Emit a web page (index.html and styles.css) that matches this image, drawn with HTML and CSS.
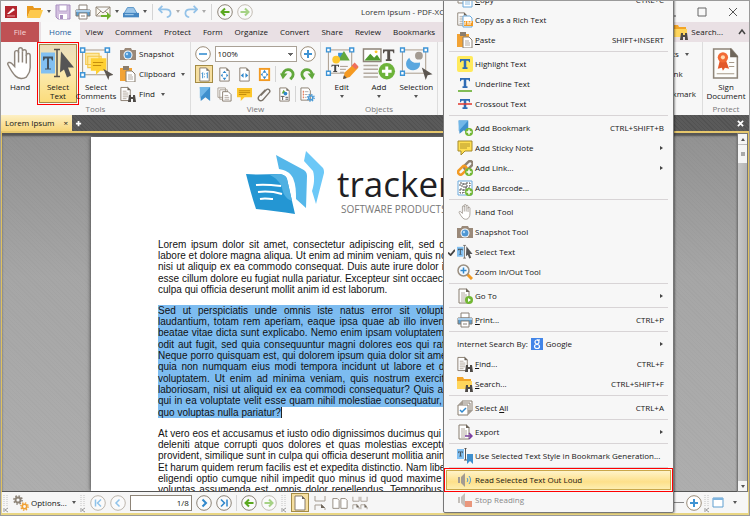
FILE: index.html
```html
<!DOCTYPE html>
<html lang="en">
<head>
    <meta charset="UTF-8">
    <meta name="viewport" content="width=device-width, initial-scale=1.0">
    <title>Lorem Ipsum - PDF-XChange Editor</title>
    <link rel="stylesheet" href="styles.css">
</head>
<body>
    <!-- shared icons -->
    <svg class="sprite" aria-hidden="true">
        <symbol id="i-folder" viewBox="0 0 16 16"><path d="M0 2h6l1 2h7v3H3L0 14z" fill="#e8981d"/><path d="M3 6h13l-3 8H0z" fill="#fdc94d"/></symbol>
        <symbol id="i-save" viewBox="0 0 16 16"><path d="M1 1h14v14H3l-2-2z" fill="#d3c0e0" stroke="#a98fc0"/><path d="M4 1h8v6H4z" fill="#fff" stroke="#b9a4cc"/><path d="M4 10h8v5H4z" fill="#fff"/><path d="M5 11h3v4H5z" fill="#a98fc0"/></symbol>
        <symbol id="i-print" viewBox="0 0 16 16"><path d="M4 1h8v5H4z" fill="#fff" stroke="#8a8178"/><path d="M1 6h14v6H1z" fill="#5f9fd0" stroke="#7d766e"/><path d="M1 6h14v2H1z" fill="#a9cdea"/><path d="M4 9h8v6H4z" fill="#fff" stroke="#8a8178"/><path d="M6 12h4" stroke="#8a8178"/></symbol>
        <symbol id="i-mail" viewBox="0 0 16 16"><path d="M1 3h14v9H1zl7 6 7-6M1 12l5-5M15 12l-5-5" fill="#fbf7ef" stroke="#94897b"/><path d="M6 11h6V8l4 4-4 4v-3H6z" fill="#6eb02b"/></symbol>
        <symbol id="i-scan" viewBox="0 0 18 16"><path d="M5 3h7l4 7H1z" fill="#9bc6ea" stroke="#5590c4"/><path d="M0 9h18v5H0z" fill="#4586c2"/><path d="M2 11h10" stroke="#b9dcf5"/></symbol>
        <symbol id="i-undo" viewBox="0 0 16 16"><path d="M5 1L1 5l4 4M1 5h8c7 0 7 8 1 9" fill="none" stroke="#93c2e8" stroke-width="2"/></symbol>
        <symbol id="i-redo" viewBox="0 0 16 16"><path d="M11 1l4 4-4 4M15 5H7c-7 0-7 8-1 9" fill="none" stroke="#93c2e8" stroke-width="2"/></symbol>
        <symbol id="i-back" viewBox="0 0 16 16"><circle cx="8" cy="8" r="7.3" fill="#fafafa" stroke="#8d8478"/><path d="M12.500 8h-8M8 4.500L4.500 8 8 11.500" fill="none" stroke="#5ba81f" stroke-width="2"/></symbol>
        <symbol id="i-fwd" viewBox="0 0 16 16"><circle cx="8" cy="8" r="7.3" fill="#fafafa" stroke="#c3bdb4"/><path d="M3.500 8h8M8 4.500l3.500 3.500L8 11.500" fill="none" stroke="#a6d285" stroke-width="2"/></symbol>
        <symbol id="i-plus" viewBox="0 0 16 16"><circle cx="8" cy="8" r="7.3" fill="#fff" stroke="#9a8c78"/><path d="M8 4v8M4 8h8" stroke="#3f93d3" stroke-width="2"/></symbol>
        <symbol id="i-minus" viewBox="0 0 16 16"><circle cx="8" cy="8" r="7.3" fill="#fff" stroke="#9a8c78"/><path d="M4 8h8" stroke="#5fa5da" stroke-width="2"/></symbol>
        <symbol id="i-page" viewBox="0 0 16 16"><path d="M3 1h7l3 3v11H3z" fill="#fff" stroke="#877c6e"/><path d="M10 1v3h3z" fill="#6f665b"/></symbol>
        <symbol id="i-textpage" viewBox="0 0 16 16"><path d="M2 1h7l3 3v11H2z" fill="#fff" stroke="#877c6e"/><path d="M9 0l4 4H9z" fill="#6f665b"/><path d="M4 5h4M4 7h6M4 9h6M4 11h6M4 13h4" stroke="#b3aaa0"/></symbol>
        <symbol id="i-binoc" viewBox="0 0 8 8"><path d="M1 1h2v2h2V1h2l1 7H5V5H3v3H0z" fill="#4e4a46"/></symbol>
        <symbol id="i-find" viewBox="0 0 16 16"><use href="#i-textpage" x="-1" width="15" height="16"/><use href="#i-binoc" x="8" y="8" width="8" height="8"/></symbol>
        <symbol id="i-search" viewBox="0 0 16 16"><path d="M0 1h6l1 2h7v10H0z" fill="#f3a526"/><path d="M0 5h15v8H0z" fill="#ffd65c"/><use href="#i-binoc" x="8" y="8" width="8" height="8"/></symbol>
        <symbol id="i-camera" viewBox="0 0 16 16"><path d="M0 4h4l1-2h6l1 2h4v10H0z" fill="#9a8979"/><circle cx="8" cy="9" r="4.500" fill="#fff"/><circle cx="8" cy="9" r="3.500" fill="#4f97d3"/><circle cx="7" cy="8" r="1.200" fill="#b5dcf8"/></symbol>
        <symbol id="i-paste" viewBox="0 0 16 16"><path d="M0 2h12v13H0z" fill="#f2a335"/><path d="M3 0h6v4H3z" fill="#8b7d6c"/><path d="M6 5h6l3 3v8H6z" fill="#fff" stroke="#877c6e"/><path d="M8 9h4M8 11h5M8 13h5" stroke="#b3aaa0"/></symbol>
        <symbol id="i-copy" viewBox="0 0 16 16"><path d="M1 0h8v11H1z" fill="#fff" stroke="#8d8478"/><path d="M6 4h7l2 2v9H6z" fill="#fff" stroke="#6aa9dc"/><path d="M8 8h5M8 10h5M8 12h5" stroke="#8fbfe6"/></symbol>
        <symbol id="i-hand" viewBox="0 0 27 34"><path d="M9 30c-3-3-6-8-8-12-1-2 2-3 4-1l3 3V6c0-3 4-3 4 0V3c0-3 4-3 4 0v2c0-3 4-3 4 0v4c0-3 4-3 4 0v12c0 6-3 8-4 10-3 2-8 2-11-1z" fill="#fff" stroke="#8f867c" stroke-width="1.500"/><path d="M12 5v11M16 5v11M20 8v9" stroke="#8f867c" stroke-width="1.500"/></symbol>
        <symbol id="i-seltext" viewBox="0 0 34 30"><path d="M0 4h14v21H0z" fill="#82c0f1"/><path d="M2 8h10v4h-1l-1-2H8v10h2v1H4v-1h2V10H4l-1 2H2z" fill="#44535f"/><path d="M13 1h6M16 1v27M13 28h6" stroke="#55514c" stroke-width="1.500"/><path d="M20 3l13 16-6 0 3 8-4 2-3-8-4 3z" fill="#555"/></symbol>
        <symbol id="i-bookmark" viewBox="0 0 16 16"><path d="M3 0h11v15l-5-4-5 4z" fill="#3e8fcd"/><path d="M3 0h11L3 12z" fill="#72b7e8"/></symbol>
        <symbol id="i-note" viewBox="0 0 16 16"><path d="M1 1h14v10H8l-4 4v-4H1z" fill="#ffdf52" stroke="#a58b2c"/><path d="M3 4h10M3 6h10M3 8h7" stroke="#b3962c"/></symbol>
        <symbol id="i-badge" viewBox="0 0 8 8"><circle cx="4" cy="4" r="4" fill="#72b734"/><path d="M4 1.500v5M1.500 4h5" stroke="#fff" stroke-width="1.500"/></symbol>
        <symbol id="i-chain" viewBox="0 0 16 16"><g fill="none" stroke-width="2.500"><rect x="6" y="3" width="10" height="5" rx="2.500" transform="rotate(-45 11 5)" stroke="#8d8071"/><rect x="0" y="8" width="10" height="5" rx="2.500" transform="rotate(-45 5 10)" stroke="#f29a22"/></g></symbol>
        <symbol id="i-check" viewBox="0 0 8 8"><path d="M0 4l3 3 5-6" fill="none" stroke="#444" stroke-width="2"/></symbol>
        <symbol id="i-speaker" viewBox="0 0 16 16"><path d="M1 5h2v6H1zM4 5l4-4v14l-4-4z" fill="#a39b92"/></symbol>
        <symbol id="i-handles" viewBox="0 0 32 32"><path d="M3 3h24v24H3z" fill="none" stroke="#a79a89"/><path d="M1 1h4v4H1zM25 1h4v4h-4zM1 25h4v4H1z" fill="#fff" stroke="#3d94d6" stroke-width="1.500"/></symbol>
        <symbol id="i-bigT" viewBox="0 0 12 12"><path d="M0 0h12v4h-1l-1-2H7.500v8H9v2H3v-2h1.500V2H2L1 4H0z" fill="currentColor"/></symbol>
        <symbol id="i-grip" viewBox="0 0 6 20"><path d="M1 2v11M4 2v11" stroke="#dcdcdc" stroke-width="2" stroke-dasharray="1 1"/><path d="M1 15v4M5 15L2 17l3 2" fill="none" stroke="#999"/></symbol>
        <symbol id="i-gear" viewBox="0 0 16 16"><circle cx="8" cy="8" r="4" fill="none" stroke="currentColor" stroke-width="3"/><circle cx="8" cy="8" r="6.500" fill="none" stroke="currentColor" stroke-width="2.500" stroke-dasharray="2.500 2.600"/></symbol>
    </svg>

    <header class="titlebar">
        <svg class="icon12" viewBox="0 0 12 12"><path d="M0 0h12v12H0z" fill="#b3262e"/><path d="M2 8l6-6 2 2-6 4z" fill="#fff"/><path d="M2 10h8" stroke="#e79a9e"/></svg>
        <div class="quick">
            <svg class="icon"><use href="#i-folder"/></svg><i class="caret"></i>
            <svg class="icon"><use href="#i-save"/></svg>
            <svg class="icon"><use href="#i-print"/></svg>
            <svg class="icon"><use href="#i-mail"/></svg><i class="caret"></i>
            <svg class="icon"><use href="#i-scan"/></svg><i class="caret"></i>
            <span class="vsep"></span>
            <svg class="icon14"><use href="#i-undo"/></svg><i class="caret faded"></i>
            <svg class="icon14"><use href="#i-redo"/></svg><i class="caret faded"></i>
            <span class="vsep"></span>
            <svg class="icon"><use href="#i-back"/></svg>
            <svg class="icon"><use href="#i-fwd"/></svg>
        </div>
        <div class="title">Lorem Ipsum - PDF-XChange Editor</div>
        <div class="window-buttons">
            <button aria-label="Minimize"><svg viewBox="0 0 10 10"><path d="M0 9h10" stroke="#555"/></svg></button>
            <button aria-label="Maximize"><svg viewBox="0 0 10 10"><path d="M1 1h8v8H1z" fill="none" stroke="#666"/></svg></button>
            <button aria-label="Close"><svg viewBox="0 0 10 10"><path d="M1 1l8 8M9 1L1 9" stroke="#555"/></svg></button>
        </div>
    </header>

    <nav class="tabs">
        <button class="tab file">File</button>
        <button class="tab active">Home</button>
        <button class="tab">View</button>
        <button class="tab">Comment</button>
        <button class="tab">Protect</button>
        <button class="tab">Form</button>
        <button class="tab">Organize</button>
        <button class="tab">Convert</button>
        <button class="tab">Share</button>
        <button class="tab">Review</button>
        <button class="tab">Bookmarks</button>
        <div class="tab-search">
            <svg class="icon"><use href="#i-search"/></svg>
            <button>Search...</button>
            <svg class="chevron" viewBox="0 0 8 8"><path d="M1 6l3-4 3 4" fill="none" stroke="#444" stroke-width="1.500"/></svg>
        </div>
    </nav>

    <section class="ribbon">
        <div class="group tools">
            <div class="group-body">
                <button class="big"><svg><use href="#i-hand"/></svg><span>Hand</span></button>
                <button class="big selected"><svg><use href="#i-seltext"/></svg><span>Select<br>Text</span></button>
                <button class="big">
                    <svg viewBox="0 0 32 32"><use href="#i-handles" width="32" height="32"/><path d="M6 6h13v11H6zM8 9h13v11H8z" fill="#ffe9a0" stroke="#f4c64a"/><path d="M11 11h15v12h-6l-4 4v-4h-5z" fill="#ffd032"/><path d="M13 15h10M13 18h8" stroke="#c58e0c"/><path d="M23 21l10 6-4 1-1 4z" fill="#5c5650"/></svg>
                    <span>Select<br>Comments</span>
                </button>
                <div class="stack">
                    <button class="small"><svg><use href="#i-camera"/></svg>Snapshot</button>
                    <button class="small"><svg><use href="#i-paste"/></svg>Clipboard<i class="caret"></i></button>
                    <button class="small"><svg><use href="#i-find"/></svg>Find<i class="caret"></i></button>
                </div>
            </div>
            <div class="group-label">Tools</div>
        </div>

        <div class="group view">
            <div class="group-body rows">
                <div class="row">
                    <button class="round" aria-label="Zoom out"><svg><use href="#i-minus"/></svg></button>
                    <select class="zoom" aria-label="Zoom"><option>100%</option></select>
                    <button class="round" aria-label="Zoom in"><svg><use href="#i-plus"/></svg></button>
                </div>
                <div class="row icons">
                    <button class="pressed" aria-label="Actual size"><svg viewBox="0 0 16 16"><use href="#i-page" width="16" height="16"/><path d="M5 7l1-1v6M8 7v1M8 10v1M10 7l1-1v6" fill="none" stroke="#3088cc"/></svg></button>
                    <button aria-label="Fit page"><svg viewBox="0 0 16 16"><use href="#i-page" width="16" height="16"/><path d="M8 4l2 2.500H6zM8 14l2-2.500H6zM4 9l2-2v4zM12 9l-2-2v4z" fill="#3088cc"/></svg></button>
                    <button aria-label="Fit width"><svg viewBox="0 0 16 16"><use href="#i-page" width="16" height="16"/><path d="M4 9l3-2.500v5zM12 9L9 6.500v5z" fill="#3088cc"/></svg></button>
                    <button aria-label="Fit visible"><svg viewBox="0 0 16 16"><path d="M2 1h12v14H2z" fill="#f29a22"/><path d="M4 3h8v10H4z" fill="#fff"/><path d="M8 3l2 3H6zM8 13l2-3H6zM4 8l2-2v4zM12 8l-2-2v4z" fill="#3088cc"/></svg></button>
                    <span class="vsep"></span>
                    <button aria-label="Rotate left"><svg viewBox="0 0 16 16"><path d="M3 9c0-8 11-8 11-1 0 3-2 4-3 5" fill="none" stroke="#62a83c" stroke-width="3"/><path d="M0 7h8l-5 6z" fill="#62a83c"/></svg></button>
                    <button aria-label="Rotate right"><svg viewBox="0 0 16 16"><path d="M13 9C13 1 2 1 2 8c0 3 2 4 3 5" fill="none" stroke="#62a83c" stroke-width="3"/><path d="M16 7H8l5 6z" fill="#62a83c"/></svg></button>
                </div>
                <div class="row icons">
                    <button aria-label="Bookmarks pane"><svg><use href="#i-bookmark"/></svg></button>
                    <button aria-label="Thumbnails"><svg viewBox="0 0 16 16"><path d="M1 1h8v10H1zM3 3h8v10H3z" fill="#fff" stroke="#a89e92"/><path d="M6 5h6l3 3v7H6z" fill="#fff" stroke="#877c6e"/><path d="M8 9h4M8 11h5M8 13h5" stroke="#b3aaa0"/></svg></button>
                    <button aria-label="Comments pane"><svg viewBox="0 0 16 16"><path d="M0 1h16v10H8l-4 4v-4H0z" fill="#fdc72c"/><path d="M2 4h12M2 6h12M2 8h8" stroke="#c08a0a"/></svg></button>
                    <button aria-label="Attachments"><svg viewBox="0 0 16 16"><path d="M4 9l6-6c2-2 5 1 3 3l-7 8c-3 2-6-1-4-4l7-7" fill="none" stroke="#7b736a" stroke-width="1.500"/></svg></button>
                    <button aria-label="Content"><svg viewBox="0 0 16 16"><use href="#i-page" width="16" height="16"/><path d="M5 7l2-4 3 4z" fill="#62a83c"/><circle cx="9" cy="7" r="2" fill="#3088cc"/><path d="M4 10h4M6 10v4M9 11h3M9 13h3" stroke="#555"/></svg></button>
                    <span class="vsep"></span>
                    <button aria-label="Pane options"><svg viewBox="0 0 16 16"><path d="M1 1h8l2 3v10H1z" fill="#fff" stroke="#877c6e"/><path d="M3 5h1M3 8h1M3 11h1" stroke="#e2592b" stroke-width="2"/><path d="M5 5h4M5 8h3M5 11h2" stroke="#aaa"/><g color="#4c9bd6"><use href="#i-gear" x="7" y="7" width="9" height="9"/></g></svg></button>
                </div>
            </div>
            <div class="group-label">View</div>
        </div>

        <div class="group objects">
            <div class="group-body">
                <button class="big">
                    <svg viewBox="0 0 34 34"><use href="#i-handles" width="32" height="32"/><path d="M13 6h6v7h-6z" fill="#3d94d6"/><path d="M13 14l6-10 6 10z" fill="#62a83c"/><circle cx="11" cy="13" r="4" fill="#fdc72c"/><g color="#444"><use href="#i-bigT" x="6" y="18" width="8" height="8"/></g><path d="M15 20h8M15 23h6M15 26h4" stroke="#a79a89"/><path d="M18 33l2-7 10-9 4 4-9 10z" fill="#f59a22"/><path d="M27 19l3-3 4 4-3 3z" fill="#ef6f5c"/><path d="M18 33l1-4 3 3z" fill="#555"/></svg>
                    <span>Edit</span><i class="caret"></i>
                </button>
                <button class="big">
                    <svg viewBox="0 0 34 34"><path d="M1 2h18v13H1z" fill="#fff" stroke="#8d8478" stroke-width="1.500"/><path d="M2 14l6-7 4 4 3-3 4 6z" fill="#4f9a2e"/><circle cx="14" cy="5" r="1.500" fill="#fdc72c"/><g color="#554f4a"><use href="#i-bigT" x="21" y="2" width="12" height="13"/></g><path d="M1 19h15M1 23h15M1 27h15M1 31h15" stroke="#b3aaa0" stroke-width="1.500"/><circle cx="25" cy="25" r="8.500" fill="#6db33a"/><path d="M25 20v10M20 25h10" stroke="#fff" stroke-width="3"/></svg>
                    <span>Add</span><i class="caret"></i>
                </button>
                <button class="big">
                    <svg viewBox="0 0 34 34"><use href="#i-handles" width="32" height="32"/><circle cx="20" cy="9" r="4" fill="#a39b92"/><path d="M10 11c-6 5-3 13 4 13 5 0 8-4 7-8-5 1-9 0-11-5z" fill="#5aa7df"/><path d="M23 21l11 7-5 1-2 5z" fill="#5c5650"/></svg>
                    <span>Selection</span><i class="caret"></i>
                </button>
            </div>
            <div class="group-label">Objects</div>
        </div>

        <div class="group links">
            <div class="group-body">
                <div class="stack">
                    <button class="small">Web Links<i class="caret"></i></button>
                    <button class="small">Create Link</button>
                    <button class="small">Add Bookmark</button>
                </div>
            </div>
        </div>
        <div class="group protect">
            <div class="group-body">
                <button class="big">
                    <svg viewBox="0 0 28 32"><path d="M2 2h17l6 7v21H2z" fill="#fdfdfb" stroke="#8d8478" stroke-width="1.500"/><path d="M18 1l8 9h-8z" fill="#6f665b"/><path d="M8 13l-2 8 4-1 1 3 2-3 4 1-3-8z" fill="#e2592b"/><circle cx="11" cy="10" r="5" fill="#f26a35"/><circle cx="11" cy="10" r="2" fill="#ffd9b0"/><path d="M17 15h5M17 19h5M5 26h17" stroke="#a79a89"/></svg>
                    <span>Sign<br>Document</span>
                </button>
            </div>
            <div class="group-label">Protect</div>
        </div>
    </section>

    <div class="doc-tabs">
        <button class="doc-tab">Lorem Ipsum <span>×</span></button>
        <button class="doc-add" aria-label="New tab"><svg viewBox="0 0 8 8"><path d="M4 1v6M1 4h6" stroke="#fff" stroke-width="2"/></svg></button>
        <button class="doc-close" aria-label="Close all"><svg viewBox="0 0 8 8"><path d="M1 1l6 6M7 1L1 7" stroke="#fff" stroke-width="2"/></svg></button>
    </div>

    <div class="workspace">
        <main class="viewport">
            <article class="page">
                <div class="brand">
                    <svg viewBox="0 0 80 65"><path d="M1 23c12 1 23 0 34 0 4 1 6 2 7 5l8 35c-13-2-26-4-39-5C7 46 4 35 1 23z" fill="#2496d3"/><path d="M25 24c5-1 8-1 10-1 4 1 6 2 7 5l5 22c-6-2-9-7-10-13-2-6-6-10-12-13z" fill="#4fb0e2"/><path d="M11 34c9-1 17 0 25 1M13 41c8-1 17 0 24 2M15 48c5-1 9 0 13 0" fill="none" stroke="#fff" stroke-width="2"/><path d="M31 4l26 14c4 2 5 4 5 7l-1 32-10-9c0-7 0-14-3-21-3-6-8-8-14-9z" fill="#55b7ea"/><path d="M61 0l17 17c1 2 1 3 1 5l-8 31-4-13c2-6 3-13 1-20l-9-10z" fill="#6cc8f7"/></svg>
                    <div>
                        <div class="brand-name">tracker</div>
                        <div class="brand-sub">SOFTWARE PRODUCTS</div>
                    </div>
                </div>
                <p>
                    <span>Lorem ipsum dolor sit amet, consectetur adipiscing elit, sed do eiusmod tempor incididunt ut</span>
                    <span>labore et dolore magna aliqua. Ut enim ad minim veniam, quis nostrud exercitation ullamco laboris</span>
                    <span>nisi ut aliquip ex ea commodo consequat. Duis aute irure dolor in reprehenderit in voluptate velit</span>
                    <span>esse cillum dolore eu fugiat nulla pariatur. Excepteur sint occaecat cupidatat non proident, sunt in</span>
                    <span class="last">culpa qui officia deserunt mollit anim id est laborum.</span>
                </p>
                <p class="marked">
                    <span>Sed ut perspiciatis unde omnis iste natus error sit voluptatem accusantium doloremque</span>
                    <span>laudantium, totam rem aperiam, eaque ipsa quae ab illo inventore veritatis et quasi architecto</span>
                    <span>beatae vitae dicta sunt explicabo. Nemo enim ipsam voluptatem quia voluptas sit aspernatur aut</span>
                    <span>odit aut fugit, sed quia consequuntur magni dolores eos qui ratione voluptatem sequi nesciunt.</span>
                    <span>Neque porro quisquam est, qui dolorem ipsum quia dolor sit amet, consectetur, adipisci velit, sed</span>
                    <span>quia non numquam eius modi tempora incidunt ut labore et dolore magnam aliquam quaerat</span>
                    <span>voluptatem. Ut enim ad minima veniam, quis nostrum exercitationem ullam corporis suscipit</span>
                    <span>laboriosam, nisi ut aliquid ex ea commodi consequatur? Quis autem vel eum iure reprehenderit</span>
                    <span>qui in ea voluptate velit esse quam nihil molestiae consequatur, vel illum qui dolorem eum fugiat</span>
                    <span class="last">quo voluptas nulla pariatur?</span>
                </p>
                <p>
                    <span>At vero eos et accusamus et iusto odio dignissimos ducimus qui blanditiis praesentium voluptatum</span>
                    <span>deleniti atque corrupti quos dolores et quas molestias excepturi sint occaecati cupiditate non</span>
                    <span>provident, similique sunt in culpa qui officia deserunt mollitia animi, id est laborum et dolorum fuga.</span>
                    <span>Et harum quidem rerum facilis est et expedita distinctio. Nam libero tempore, cum soluta nobis est</span>
                    <span>eligendi optio cumque nihil impedit quo minus id quod maxime placeat facere possimus, omnis</span>
                    <span>voluptas assumenda est, omnis dolor repellendus. Temporibus autem quibusdam et aut officiis</span>
                </p>
            </article>
        </main>
        <div class="scrollbar">
            <button aria-label="Scroll up"><i class="caret up"></i></button>
            <div class="thumb"></div>
            <button class="down" aria-label="Scroll down"><i class="caret"></i></button>
        </div>
    </div>

    <footer class="statusbar">
        <svg class="grip"><use href="#i-grip"/></svg>
        <button class="options">
            <svg viewBox="0 0 16 16"><g color="#8d8478"><use href="#i-gear" width="10" height="10"/></g><g color="#f0a032"><use href="#i-gear" x="7" y="7" width="9" height="9"/></g></svg>
            Options...<i class="caret"></i>
        </button>
        <svg class="grip"><use href="#i-grip"/></svg>
        <button class="round" aria-label="First page"><svg viewBox="0 0 16 16"><circle cx="8" cy="8" r="7.300" fill="#fafafa" stroke="#bdb6ad"/><path d="M5.500 4.500v7M11 4.500L7.500 8l3.500 3.500" fill="none" stroke="#8fc3ea" stroke-width="1.500"/></svg></button>
        <button class="round" aria-label="Previous page"><svg viewBox="0 0 16 16"><circle cx="8" cy="8" r="7.300" fill="#fafafa" stroke="#bdb6ad"/><path d="M9.500 4.500L6 8l3.500 3.500" fill="none" stroke="#8fc3ea" stroke-width="1.500"/></svg></button>
        <input class="page-no" type="text" value="1/8" aria-label="Page">
        <button class="round" aria-label="Next page"><svg viewBox="0 0 16 16"><circle cx="8" cy="8" r="7.300" fill="#fafafa" stroke="#8d8478"/><path d="M6.500 4.500L10 8l-3.500 3.500" fill="none" stroke="#2f87cb" stroke-width="2"/></svg></button>
        <button class="round" aria-label="Last page"><svg viewBox="0 0 16 16"><circle cx="8" cy="8" r="7.300" fill="#fafafa" stroke="#8d8478"/><path d="M5 4.500L8.500 8 5 11.500M11 4.500v7" fill="none" stroke="#2f87cb" stroke-width="1.500"/></svg></button>
        <span class="vsep"></span>
        <button class="round" aria-label="Back"><svg><use href="#i-back"/></svg></button>
        <button class="round" aria-label="Forward"><svg><use href="#i-fwd"/></svg></button>
        <svg class="grip"><use href="#i-grip"/></svg>
        <button class="layout pressed" aria-label="Single page"><svg viewBox="0 0 16 16"><use href="#i-page" width="16" height="16"/></svg></button>
        <button class="layout" aria-label="Continuous"><svg viewBox="0 0 16 16"><path d="M3 1v5h10V1M3 15v-5h7l3 3v2" fill="none" stroke="#a59c91"/><path d="M9 9v4h4z" fill="#6f665b"/></svg></button>
        <button class="layout" aria-label="Two pages"><svg viewBox="0 0 18 16"><path d="M1 3h5l2 2v9H1zM10 3h5l2 2v9h-7z" fill="#fff" stroke="#8d8478"/></svg></button>
        <button class="layout" aria-label="Two pages continuous"><svg viewBox="0 0 18 16"><path d="M1 1v5h7V1M1 15v-5h5l2 3v2M10 1v5h7V1M10 15v-5h5l2 3v2" fill="none" stroke="#a59c91"/><path d="M5 9v4h3zM14 9v4h3z" fill="#6f665b"/></svg></button>
        <div class="zoom-tools">
            <input type="range" aria-label="Zoom level">
            <button class="round" aria-label="Zoom in"><svg><use href="#i-plus"/></svg></button>
            <svg class="grip"><use href="#i-grip"/></svg>
            <svg class="icon12" viewBox="0 0 12 12"><path d="M1 1h10v9H1z" fill="#fff" stroke="#5f9fd0"/><path d="M1 1h10v2H1z" fill="#7fb5e0"/></svg>
            <i class="caret"></i>
        </div>
    </footer>

    <div class="menu" role="menu">
        <button class="item"><svg><use href="#i-copy"/></svg><span><u>C</u>opy</span><kbd>CTRL+C</kbd></button>
        <button class="item"><svg viewBox="0 0 16 16"><use href="#i-textpage" x="-1" width="14" height="14"/><path d="M6 4h7l2 2v9H6z" fill="#fff" stroke="#6aa9dc"/><path d="M7 9h9v5H7z" fill="#f29a22"/><path d="M8 13v-3h1M11 10v3M10 10h2M13 13v-3h2" fill="none" stroke="#fff"/></svg><span>Copy as a Rich Text</span></button>
        <button class="item"><svg><use href="#i-paste"/></svg><span><u>P</u>aste</span><kbd>SHIFT+INSERT</kbd></button>
        <hr>
        <button class="item"><svg viewBox="0 0 16 16"><rect width="16" height="16" rx="2" fill="#ffea5c"/><g color="#2f6cb5"><use href="#i-bigT" x="3" y="2" width="10" height="12"/></g></svg><span>Highlight Text</span></button>
        <button class="item"><svg viewBox="0 0 16 16"><g color="#2f6cb5"><use href="#i-bigT" x="3" y="1" width="10" height="12"/></g><path d="M1 15h14" stroke="#5ba81f" stroke-width="1.500"/></svg><span>Underline Text</span></button>
        <button class="item"><svg viewBox="0 0 16 16"><g color="#2f6cb5"><use href="#i-bigT" x="3" y="2" width="10" height="12"/></g><path d="M1 8h14" stroke="#e0372c" stroke-width="1.500"/></svg><span>Crossout Text</span></button>
        <hr>
        <button class="item"><svg viewBox="0 0 16 16"><use href="#i-bookmark" x="-1" width="14" height="15"/><use href="#i-badge" x="8" y="8" width="8" height="8"/></svg><span>Add Bookmark</span><kbd>CTRL+SHIFT+B</kbd></button>
        <button class="item"><svg><use href="#i-note"/></svg><span>Add Sticky Note</span><i class="arrow"></i></button>
        <button class="item"><svg viewBox="0 0 16 16"><use href="#i-chain" width="16" height="16"/><use href="#i-badge" x="8" y="8" width="8" height="8"/></svg><span>Add Link...</span><i class="arrow"></i></button>
        <button class="item"><svg viewBox="0 0 16 16"><path d="M1 1h14v14H1z" fill="#fff" stroke="#6aa9dc"/><path d="M3 3h3v3H3zM9 3h4v3H9zM3 9h3v4H3zM7 3v10M8 8h5M9 6v5" fill="none" stroke="#555" stroke-dasharray="2 1"/><use href="#i-badge" x="8" y="8" width="8" height="8"/></svg><span>Add Barcode...</span></button>
        <hr>
        <button class="item"><svg><use href="#i-hand"/></svg><span>Hand Tool</span></button>
        <button class="item"><svg><use href="#i-camera"/></svg><span>Snapshot Tool</span></button>
        <button class="item checked"><svg class="tick"><use href="#i-check"/></svg><svg><use href="#i-seltext"/></svg><span>Select Text</span></button>
        <button class="item"><svg viewBox="0 0 16 16"><path d="M10 10l5 5" stroke="#f29a22" stroke-width="3"/><circle cx="6.500" cy="6.500" r="5.500" fill="#f2f9ff" stroke="#9b8f80" stroke-width="1.500"/><path d="M6.500 3.500v6M3.500 6.500h6" stroke="#3088cc" stroke-width="1.500"/></svg><span>Zoom In/Out Tool</span></button>
        <hr>
        <button class="item"><svg viewBox="0 0 16 16"><use href="#i-textpage" width="16" height="16"/><circle cx="12" cy="12" r="4" fill="#72b734"/><path d="M11 10l3 2-3 2z" fill="#fff"/></svg><span>Go To</span><i class="arrow"></i></button>
        <hr>
        <button class="item"><svg><use href="#i-print"/></svg><span><u>P</u>rint...</span><kbd>CTRL+P</kbd></button>
        <hr>
        <button class="item wide"><span>Internet Search By:</span><svg viewBox="0 0 12 12"><path d="M0 0h12v12H0z" fill="#4285e8"/><g fill="none" stroke="#fff" stroke-width="1.200"><circle cx="6" cy="4" r="2"/><ellipse cx="6" cy="8.500" rx="2.500" ry="2"/><path d="M6 2h3"/></g></svg><span>Google</span><i class="arrow"></i></button>
        <button class="item"><svg><use href="#i-find"/></svg><span><u>F</u>ind...</span><kbd>CTRL+F</kbd></button>
        <button class="item"><svg><use href="#i-search"/></svg><span><u>S</u>earch...</span><kbd>CTRL+SHIFT+F</kbd></button>
        <hr>
        <button class="item"><svg viewBox="0 0 16 16"><path d="M5 1h10v10H5zM3 3h10v10H3z" fill="#fff" stroke="#877c6e"/><path d="M1 5h10v10H1z" fill="#fff" stroke="#877c6e"/><path d="M3 10l2 2 4-4" fill="none" stroke="#3088cc" stroke-width="1.500"/></svg><span>Select <u>A</u>ll</span><kbd>CTRL+A</kbd></button>
        <hr>
        <button class="item"><svg viewBox="0 0 16 16"><use href="#i-textpage" width="16" height="16"/><path d="M8 12h7M12 9l3 3-3 3" fill="none" stroke="#7b3fa0" stroke-width="1.500"/></svg><span>Export</span><i class="arrow"></i></button>
        <hr>
        <button class="item"><svg viewBox="0 0 16 16"><path d="M0 1h7v10H0z" fill="#82c0f1"/><g color="#44535f"><use href="#i-bigT" x="1" y="3" width="5" height="6"/></g><path d="M7 0h3M8.500 0v12M7 12h3" stroke="#555"/><path d="M10 6h6v10l-3-3-3 3z" fill="#3e8fcd"/></svg><span>Use Selected Text Style in Bookmark Generation...</span></button>
        <hr>
        <button class="item hot"><svg viewBox="0 0 16 16"><use href="#i-speaker" width="16" height="16"/><path d="M10 6c1 1 1 3 0 4M12 4c2 2 2 6 0 8" fill="none" stroke="#4c9bd6"/></svg><span>Read Selected Text Out Loud</span></button>
        <button class="item disabled" disabled><svg viewBox="0 0 16 16"><use href="#i-speaker" width="16" height="16"/><path d="M8 9h7v6H8z" fill="#e2592b"/></svg><span>Stop Reading</span></button>
    </div>
</body>
</html>
```
FILE: styles.css
```css
* {
    box-sizing: border-box;
}

body {
    margin: 0;
    height: 100vh;
    display: flex;
    flex-direction: column;
    position: relative;
    overflow: hidden;
    border: 1px solid #9a9a9a;
    background: #f7f7f7;
    color: #151515;
    font-family: "Open Sans", "Noto Sans", sans-serif;
    font-size: 8px;
    line-height: 10px;
}

button, input, select {
    font: inherit;
    color: inherit;
    border: none;
    background: none;
    padding: 0;
    margin: 0;
}

svg {
    display: block;
    flex: none;
}

.sprite {
    position: absolute;
    width: 0;
    height: 0;
}

.icon {
    width: 16px;
    height: 16px;
}

.icon14 {
    width: 14px;
    height: 14px;
}

.icon12 {
    width: 12px;
    height: 12px;
}

.caret {
    flex: none;
    border: 2px solid transparent;
    border-top: 3px solid #555555;
    border-bottom: 0;
}

.caret.faded {
    border-top-color: #aaaaaa;
}

.caret.up {
    border-top: 0;
    border-bottom: 3px solid #555555;
}

.vsep {
    width: 1px;
    height: 16px;
    background: #d4d4d4;
}

/* title bar */
.titlebar {
    flex: none;
    height: 21px;
    display: flex;
    align-items: center;
    padding: 0 11px 0 4px;
    background: #f8f8f8;
}

.quick {
    display: flex;
    align-items: center;
    gap: 4px;
    margin-left: 10px;
}

.quick .vsep {
    margin: 0 1px;
}

.title {
    margin-left: 108px;
    color: #333333;
}

.window-buttons {
    margin-left: auto;
    display: flex;
    gap: 21px;
}

.window-buttons svg {
    width: 10px;
    height: 10px;
}

/* ribbon tabs */
.tabs {
    flex: none;
    height: 20px;
    display: flex;
    background: #e9e0e4;
}

.tab {
    padding: 0 6px;
}

.tab.file {
    width: 38px;
    margin-right: 2px;
    background: #bf5154;
    color: #f6d5d5;
}

.tab.active {
    padding: 0 8px;
    background: #f9f9f9;
    color: #1d5c9c;
}

.tab-search {
    margin-left: auto;
    display: flex;
    align-items: center;
    gap: 3px;
    padding-right: 3px;
}

.chevron {
    width: 8px;
    height: 8px;
    margin-left: 12px;
}

/* ribbon */
.ribbon {
    flex: none;
    height: 73px;
    display: flex;
    background: #f7f7f7;
}

.group {
    display: flex;
    flex-direction: column;
    border-right: 1px solid #dddddd;
}

.group-body {
    flex: none;
    height: 62px;
    display: flex;
    padding: 2px 2px 0;
}

.group-label {
    height: 11px;
    text-align: center;
    color: #777777;
}

.big {
    width: 38px;
    display: flex;
    flex-direction: column;
    align-items: center;
    padding-top: 3px;
    line-height: 9px;
}

.big svg {
    width: 34px;
    height: 33px;
    margin-bottom: 2px;
}

.big .caret {
    margin-top: 4px;
}

.big.selected {
    height: 59px;
    padding-top: 2px;
    border: 1px solid #a38b45;
    background: linear-gradient(#e9ddbb, #fbe9ad 50%, #fbdc7c);
    outline: 1px solid #ff0000;
    outline-offset: 1px;
}

.stack {
    display: flex;
    flex-direction: column;
}

.small {
    height: 20px;
    display: flex;
    align-items: center;
    gap: 3px;
}

.small svg {
    width: 16px;
    height: 16px;
}

.small .caret {
    margin-left: 3px;
}

.tools {
    width: 190px;
}

.tools .group-body {
    padding-left: 0;
}

.tools .stack {
    margin-left: 5px;
}

.view {
    width: 130px;
}

.view .rows {
    flex-direction: column;
    padding: 2px 4px 0;
}

.row {
    height: 20px;
    display: flex;
    align-items: center;
    justify-content: space-between;
}

.round svg {
    width: 16px;
    height: 16px;
}

.zoom {
    width: 82px;
    height: 16px;
    appearance: none;
    padding: 0 2px;
    border: 1px solid #a9a196;
    background: linear-gradient(#666666, #666666) 72px 6px / 5px 1px no-repeat, linear-gradient(#666666, #666666) 73px 7px / 3px 1px no-repeat, linear-gradient(#666666, #666666) 74px 8px / 1px 1px no-repeat, #ffffff;
}

.icons button {
    width: 18px;
    height: 18px;
    display: flex;
    align-items: center;
    justify-content: center;
}

.icons svg {
    width: 15px;
    height: 15px;
}

.icons .pressed, .layout.pressed {
    border: 1px solid #a38b45;
    background: #f6dfa0;
}

.objects {
    width: 117px;
}

.links {
    margin-left: auto;
}

.links .group-body {
    padding: 2px 6px 0 0;
}

.protect {
    width: 46px;
    border-right: none;
}

.protect .group-body {
    justify-content: center;
}

/* document tabs */
.doc-tabs {
    flex: none;
    height: 16px;
    display: flex;
    align-items: center;
    background: repeating-linear-gradient(45deg, #525252 0 1px, #5a5a5a 1px 3px);
}

.doc-tab {
    height: 16px;
    width: 71px;
    padding: 0 4px;
    display: flex;
    align-items: center;
    justify-content: space-between;
    background: linear-gradient(#fdf0c4, #f8d67a);
}

.doc-add svg, .doc-close svg {
    width: 7px;
    height: 7px;
}

.doc-add {
    margin-left: 3px;
}

.doc-close {
    margin-left: auto;
    margin-right: 5px;
}

/* document area */
.workspace {
    flex: 1;
    min-height: 0;
    display: flex;
    border: 1px solid #e0c15f;
    border-top: 2px solid #e6c76c;
    border-bottom: none;
}

.viewport {
    flex: 1;
    overflow: hidden;
    padding: 3px 82px 0 89px;
    border: 1px solid #555555;
    border-width: 1px 0;
    background: repeating-linear-gradient(45deg, rgba(0, 0, 0, .02) 0 1px, transparent 1px 3px), linear-gradient(#929292, #a6a6a6 40%, #aeaeae);
    box-shadow: inset 0 2px 2px #555555;
}

.page {
    height: 100%;
    overflow: hidden;
    padding: 14px 67px 0;
    background: #ffffff;
    color: #111111;
    box-shadow: 0 0 4px #333333;
    font-family: "Liberation Sans", Arial, sans-serif;
    font-size: 10px;
    line-height: 11px;
}

.brand {
    display: flex;
    gap: 12px;
    margin-left: 87px;
    height: 88px;
    font-family: "Open Sans", sans-serif;
    white-space: nowrap;
}

.brand svg {
    width: 80px;
    height: 65px;
}

.brand-name {
    padding-top: 13px;
    font-size: 35px;
    line-height: 40px;
    color: #1f1f24;
}

.brand-sub {
    padding-left: 4px;
    color: #777777;
}

.page p {
    margin: 0 0 10px;
}

.page p span {
    display: block;
    white-space: nowrap;
    text-align: justify;
    text-align-last: justify;
}

.page p span:nth-child(3n) {
    line-height: 12px;
}

.page p .last {
    width: max-content;
    text-align-last: left;
}

.marked span {
    background: #7dbcf0;
}

.marked .last {
    border-right: 1px solid #222222;
}

.scrollbar {
    flex: none;
    width: 11px;
    display: flex;
    flex-direction: column;
    border: 1px solid #777777;
    background: linear-gradient(90deg, #c8c8c8, #b4b4b4);
}

.scrollbar button {
    height: 10px;
    display: flex;
    align-items: center;
    justify-content: center;
    background: #f5f5f5;
}

.scrollbar .down {
    margin-top: auto;
}

.thumb {
    height: 18px;
    margin-top: 1px;
    background: linear-gradient(#aaaaaa, #aaaaaa) 3px 7px / 4px 4px no-repeat, #f5f5f5;
}

/* status bar */
.statusbar {
    flex: none;
    height: 23px;
    display: flex;
    align-items: center;
    gap: 4px;
    padding: 0 1px;
    border: 1px solid #e6d48f;
    border-top: none;
    border-bottom: 2px solid #e9d683;
    background: #f6f6f6;
}

.grip {
    width: 6px;
    height: 20px;
}

.options {
    display: flex;
    align-items: center;
    gap: 2px;
}

.options svg {
    width: 16px;
    height: 16px;
}

.options .caret {
    margin-left: 3px;
}

.page-no {
    width: 62px;
    height: 16px;
    padding: 0 2px;
    text-align: right;
    border: 1px solid #8d8478;
    background: #ffffff;
}

.layout {
    width: 18px;
    height: 19px;
    display: flex;
    align-items: center;
    justify-content: center;
}

.layout svg {
    width: 16px;
    height: 16px;
}

.statusbar .layout {
    margin-right: -2px;
}

.zoom-tools {
    margin-left: auto;
    padding-right: 10px;
    display: flex;
    align-items: center;
    gap: 2px;
}

.zoom-tools input {
    appearance: none;
    width: 80px;
    height: 1px;
    background: #888888;
}

.zoom-tools .caret {
    margin-left: 7px;
}

/* context menu */
.menu {
    position: absolute;
    right: 75px;
    bottom: 2px;
    width: 231px;
    padding: 2px;
    border: 1px solid #777777;
    border-radius: 2px;
    background: #f7f7f7;
    box-shadow: 1px 0 2px rgba(0, 0, 0, .4);
}

.menu hr {
    height: 1px;
    margin: 1px 3px 2px;
    border: none;
    background: #d8d4d6;
}

.item {
    position: relative;
    width: 100%;
    height: 20px;
    padding: 0 7px 0 11px;
    display: flex;
    align-items: center;
    gap: 2px;
    text-align: left;
    white-space: nowrap;
}

.item svg {
    width: 16px;
    height: 16px;
}

.item .tick {
    position: absolute;
    left: 2px;
    width: 7px;
    height: 7px;
}

.item kbd, .item .arrow {
    margin-left: auto;
    font-family: inherit;
}

.item.wide {
    gap: 3px;
}

.item.wide svg {
    width: 12px;
    height: 12px;
}

.arrow {
    margin-right: 1px;
    border: 2px solid transparent;
    border-left: 3px solid #444444;
    border-right: 0;
}

.item.hot {
    margin-top: 2px;
    border: 1px solid #c9a74a;
    padding: 0 6px 0 10px;
    background: linear-gradient(#fff3c9, #fde08a 60%, #fdeeb0);
    outline: 1px solid #ff0000;
    outline-offset: 1px;
}

.item.disabled {
    color: #888888;
}

.item.disabled svg {
    opacity: .6;
}
```
